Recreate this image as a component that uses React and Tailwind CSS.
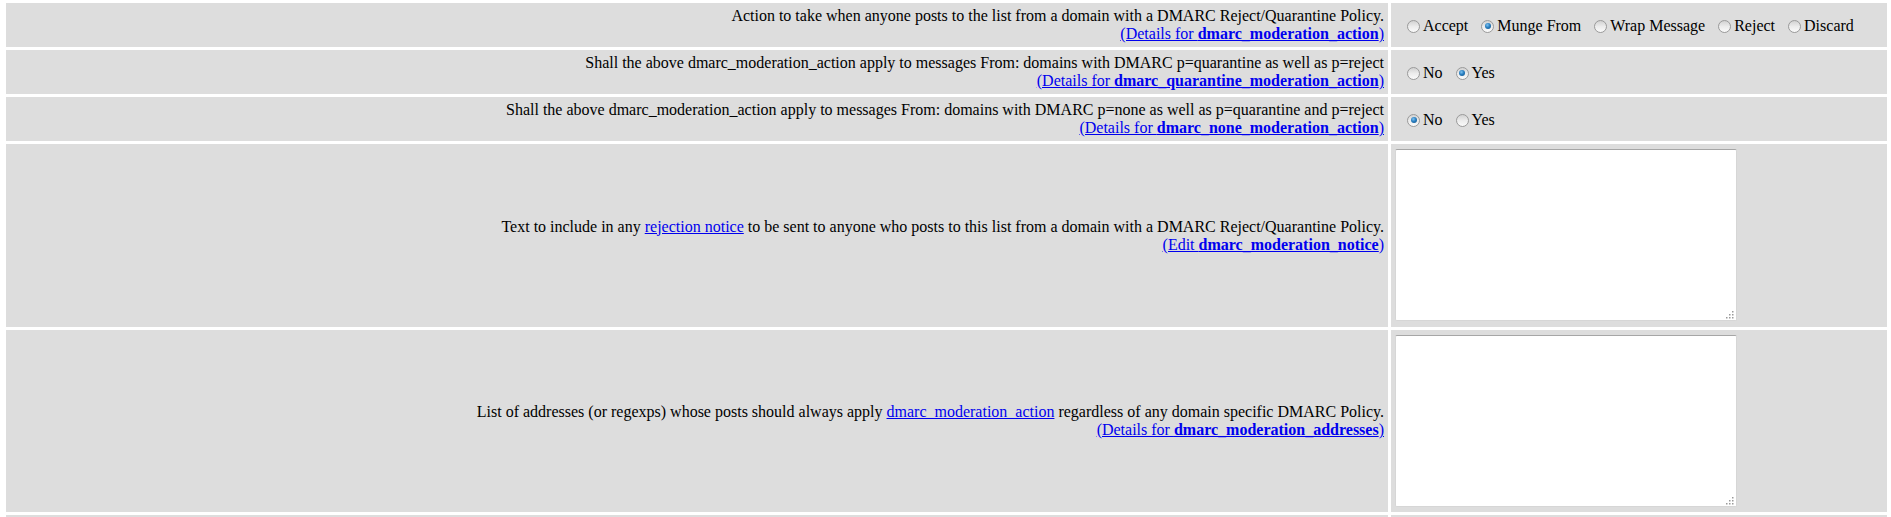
import React from "react";

const linkCls = "text-[#0000ee] underline";

function Radio({ checked }) {
    return (
        <span className="inline-flex items-center justify-center w-[13px] h-[13px] rounded-full border border-[#9a9a9a] bg-gradient-to-b from-[#d2d2d2] via-[#ececec] to-[#fafafa] shrink-0">
            {checked && (
                <span className="block w-[6px] h-[6px] rounded-full bg-[radial-gradient(circle_at_40%_35%,#7fc2f0_0%,#2a7fc0_45%,#0f4f86_100%)]"></span>
            )}
        </span>
    );
}

function Options({ items, selected }) {
    return (
        <div className="flex items-center pl-[12px] mt-[2px]">
            {items.map((label, i) => (
                <label key={label} className={`flex items-center ${i > 0 ? "ml-[13px]" : ""}`}>
                    <Radio checked={label === selected} />
                    <span className="ml-[3px]">{label}</span>
                </label>
            ))}
        </div>
    );
}

function TextBox() {
    return (
        <div className="relative w-[342px] h-[172px]">
            <textarea className="block w-full h-full resize-none bg-white border border-[#d6d6d6] border-t-[#a6a6a6] rounded-[2px] outline-none"></textarea>
            <svg className="absolute right-[3px] bottom-[2px]" width="8" height="8" viewBox="0 0 8 8">
                <rect x="6" y="0" width="1.5" height="1.5" fill="#9a9a9a" />
                <rect x="3" y="3" width="1.5" height="1.5" fill="#9a9a9a" />
                <rect x="6" y="3" width="1.5" height="1.5" fill="#9a9a9a" />
                <rect x="0" y="6" width="1.5" height="1.5" fill="#9a9a9a" />
                <rect x="3" y="6" width="1.5" height="1.5" fill="#9a9a9a" />
                <rect x="6" y="6" width="1.5" height="1.5" fill="#9a9a9a" />
            </svg>
        </div>
    );
}

function Label({ children, link }) {
    return (
        <div className="bg-[#dddddd] flex flex-col justify-center text-right px-[4px] py-[4px]">
            <div>{children}</div>
            <div>{link}</div>
        </div>
    );
}

const App = () => {
    return (
        <div className="bg-white min-h-screen text-black text-[16px] leading-[18px] font-['Liberation_Serif','Times_New_Roman',serif] pt-[3px] pl-[6px] pr-[4px]">
            <div className="grid grid-cols-[1382px_1fr] gap-[3px]">
                <Label
                    link={
                        <a href="#" className={linkCls}>
                            (Details for <strong>dmarc_moderation_action</strong>)
                        </a>
                    }
                >
                    Action to take when anyone posts to the list from a domain with a DMARC Reject/Quarantine Policy.
                </Label>
                <div className="bg-[#dddddd] flex items-center p-[4px]">
                    <Options
                        items={["Accept", "Munge From", "Wrap Message", "Reject", "Discard"]}
                        selected="Munge From"
                    />
                </div>

                <Label
                    link={
                        <a href="#" className={linkCls}>
                            (Details for <strong>dmarc_quarantine_moderation_action</strong>)
                        </a>
                    }
                >
                    Shall the above dmarc_moderation_action apply to messages From: domains with DMARC p=quarantine as well as p=reject
                </Label>
                <div className="bg-[#dddddd] flex items-center p-[4px]">
                    <Options items={["No", "Yes"]} selected="Yes" />
                </div>

                <Label
                    link={
                        <a href="#" className={linkCls}>
                            (Details for <strong>dmarc_none_moderation_action</strong>)
                        </a>
                    }
                >
                    Shall the above dmarc_moderation_action apply to messages From: domains with DMARC p=none as well as p=quarantine and p=reject
                </Label>
                <div className="bg-[#dddddd] flex items-center p-[4px]">
                    <Options items={["No", "Yes"]} selected="No" />
                </div>

                <Label
                    link={
                        <a href="#" className={linkCls}>
                            (Edit <strong>dmarc_moderation_notice</strong>)
                        </a>
                    }
                >
                    Text to include in any <a href="#" className={linkCls}>rejection notice</a> to be sent to anyone who posts to this list from a domain with a DMARC Reject/Quarantine Policy.
                </Label>
                <div className="bg-[#dddddd] pl-[4px] pt-[5px] pb-[6px]">
                    <TextBox />
                </div>

                <Label
                    link={
                        <a href="#" className={linkCls}>
                            (Details for <strong>dmarc_moderation_addresses</strong>)
                        </a>
                    }
                >
                    List of addresses (or regexps) whose posts should always apply <a href="#" className={linkCls}>dmarc_moderation_action</a> regardless of any domain specific DMARC Policy.
                </Label>
                <div className="bg-[#dddddd] pl-[4px] pt-[5px] pb-[5px]">
                    <TextBox />
                </div>

                <div className="bg-[#dddddd] h-[44px]"></div>
                <div className="bg-[#dddddd] h-[44px]"></div>
            </div>
        </div>
    );
};

export default App;
